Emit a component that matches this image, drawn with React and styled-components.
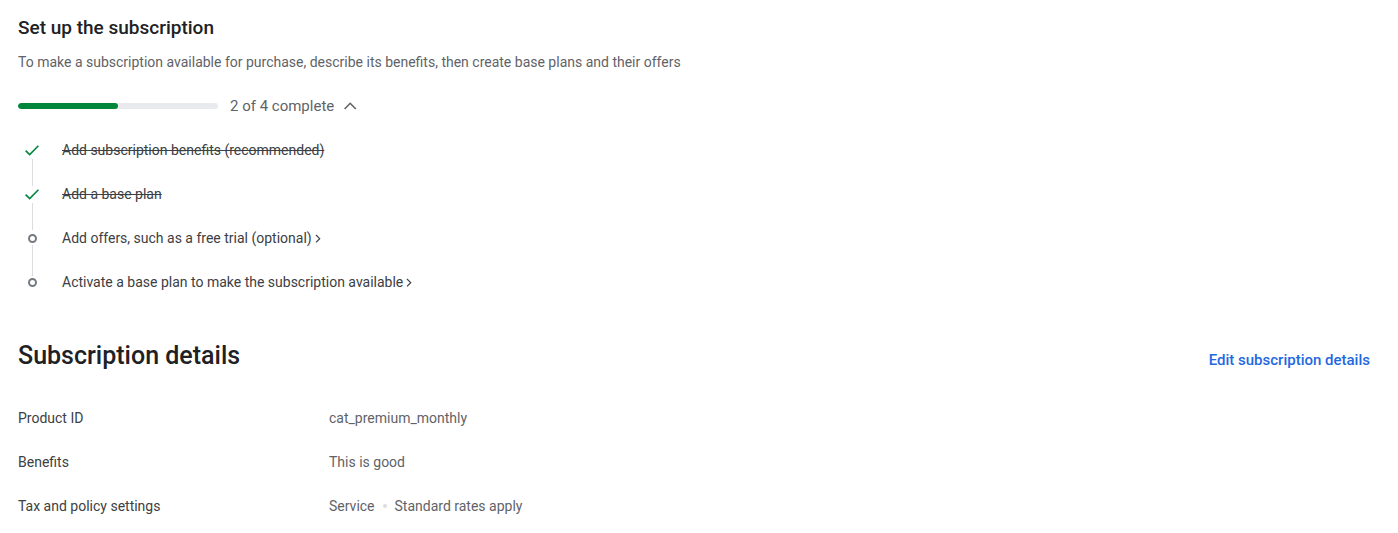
import React, { useState } from "react";
import styled, { createGlobalStyle } from "styled-components";

const GlobalStyle = createGlobalStyle`
  *, *::before, *::after { box-sizing: border-box; }
  body {
    margin: 0;
    background: #fff;
    color: #3c4043;
    font: 400 14px/20px Roboto, "Liberation Sans", sans-serif;
  }
`;

const Page = styled.main`
  padding: 16px 28px 0 18px;
`;

const Section = styled.section`
  margin-bottom: 36px;
`;

const SetupTitle = styled.h2`
  margin: 0 0 12px;
  color: #202124;
  font-size: 19px;
  line-height: 24px;
  font-weight: 500;
`;

const Description = styled.p`
  margin: 0 0 24px;
  color: #5f6368;
`;

const ProgressRow = styled.div`
  display: flex;
  align-items: center;
  margin-bottom: 12px;
`;

const Track = styled.div`
  width: 200px;
  height: 6px;
  margin-right: 12px;
  overflow: hidden;
  border-radius: 3px;
  background: #e8eaed;
`;

const Fill = styled.div`
  height: 100%;
  border-radius: 3px;
  background: #00873c;
`;

const Toggle = styled.button`
  display: flex;
  align-items: center;
  gap: 7px;
  padding: 0;
  border: 0;
  background: none;
  color: #5f6368;
  font: inherit;
  font-size: 15px;
  cursor: pointer;
`;

const Steps = styled.ol`
  margin: 0;
  padding: 0;
  list-style: none;
`;

const Step = styled.li`
  position: relative;
  display: grid;
  grid-template-columns: 29px 1fr;
  column-gap: 15px;
  align-items: center;
  height: 44px;

  &:not(:last-child)::after {
    content: "";
    position: absolute;
    top: ${(p) => (p.$done ? 31 : 29)}px;
    left: 14px;
    width: 1px;
    height: ${(p) => (p.$last ? 31 : 27)}px;
    background: #dadce0;
  }
`;

const Marker = styled.span`
  display: flex;
  justify-content: center;
`;

const StepLink = styled.a`
  display: inline-flex;
  align-items: center;
  gap: 3px;
  justify-self: start;
  color: inherit;
  text-decoration: none;
`;

const DetailsHeader = styled.div`
  display: flex;
  align-items: center;
  justify-content: space-between;
  margin-bottom: 24px;
`;

const DetailsTitle = styled.h1`
  margin: 0;
  color: #202124;
  font-size: 25px;
  line-height: 32px;
  font-weight: 500;
`;

const EditLink = styled.a`
  padding-top: 8px;
  color: #1f68e0;
  font-weight: 500;
  font-size: 15px;
  text-decoration: none;
`;

const Details = styled.dl`
  margin: 0;
`;

const DetailRow = styled.div`
  display: grid;
  grid-template-columns: 311px 1fr;
  align-items: center;
  height: 44px;
`;

const Value = styled.dd`
  display: flex;
  align-items: center;
  gap: 8px;
  margin: 0;
  color: #5f6368;
`;

const Dot = styled.span`
  width: 4px;
  height: 4px;
  border-radius: 50%;
  background: #dadce0;
`;

const ChevronUp = ({ open }) => (
  <svg width="18" height="18" viewBox="0 0 18 18" fill="none" stroke="#5f6368" strokeWidth="1.6" aria-hidden="true">
    <path d={open ? "M3.6 12 9.2 6.3l5.6 5.7" : "M3.6 6 9.2 11.7 14.8 6"} />
  </svg>
);

const ChevronRight = () => (
  <svg width="6" height="10" viewBox="0 0 6 10" fill="none" stroke="#3c4043" strokeWidth="1.2" aria-hidden="true">
    <path d="M1 2 4.7 5.7 1 9.4" />
  </svg>
);

const Check = () => (
  <svg width="15" height="12" viewBox="0 0 15 12" fill="none" stroke="#00873c" strokeWidth="1.6" role="img" aria-label="Complete">
    <path d="M.6 6.6 4.7 10.6 13.4 1.8" />
  </svg>
);

const Circle = () => (
  <svg width="9" height="10" viewBox="0 0 9 10" fill="none" stroke="#757a80" strokeWidth="2" role="img" aria-label="Not complete">
    <circle cx="4.5" cy="5.5" r="3.5" />
  </svg>
);

const steps = [
  { text: "Add subscription benefits (recommended)", done: true },
  { text: "Add a base plan", done: true },
  { text: "Add offers, such as a free trial (optional)", done: false },
  { text: "Activate a base plan to make the subscription available", done: false },
];

const details = [
  { label: "Product ID", values: ["cat_premium_monthly"] },
  { label: "Benefits", values: ["This is good"] },
  { label: "Tax and policy settings", values: ["Service", "Standard rates apply"] },
];

export default function App() {
  const [open, setOpen] = useState(true);
  const done = steps.filter((s) => s.done).length;

  return (
    <>
      <GlobalStyle />
      <Page>
        <Section>
          <SetupTitle>Set up the subscription</SetupTitle>
          <Description>
            To make a subscription available for purchase, describe its benefits, then create base plans and their offers
          </Description>
          <ProgressRow>
            <Track role="progressbar" aria-label="Setup progress" aria-valuemin={0} aria-valuemax={steps.length} aria-valuenow={done}>
              <Fill style={{ width: `${(done / steps.length) * 100}%` }} />
            </Track>
            <Toggle type="button" aria-expanded={open} onClick={() => setOpen(!open)}>
              {`${done} of ${steps.length} complete`}
              <ChevronUp open={open} />
            </Toggle>
          </ProgressRow>
          {open && (
            <Steps>
              {steps.map((step, i) => (
                <Step key={step.text} $done={step.done} $last={i === steps.length - 2}>
                  <Marker>{step.done ? <Check /> : <Circle />}</Marker>
                  {step.done ? (
                    <s>{step.text}</s>
                  ) : (
                    <StepLink href="#">
                      {step.text}
                      <ChevronRight />
                    </StepLink>
                  )}
                </Step>
              ))}
            </Steps>
          )}
        </Section>
        <section>
          <DetailsHeader>
            <DetailsTitle>Subscription details</DetailsTitle>
            <EditLink href="#">Edit subscription details</EditLink>
          </DetailsHeader>
          <Details>
            {details.map(({ label, values }) => (
              <DetailRow key={label}>
                <dt>{label}</dt>
                <Value>
                  {values.map((value, i) => (
                    <React.Fragment key={value}>
                      {i > 0 && <Dot />}
                      <span>{value}</span>
                    </React.Fragment>
                  ))}
                </Value>
              </DetailRow>
            ))}
          </Details>
        </section>
      </Page>
    </>
  );
}
